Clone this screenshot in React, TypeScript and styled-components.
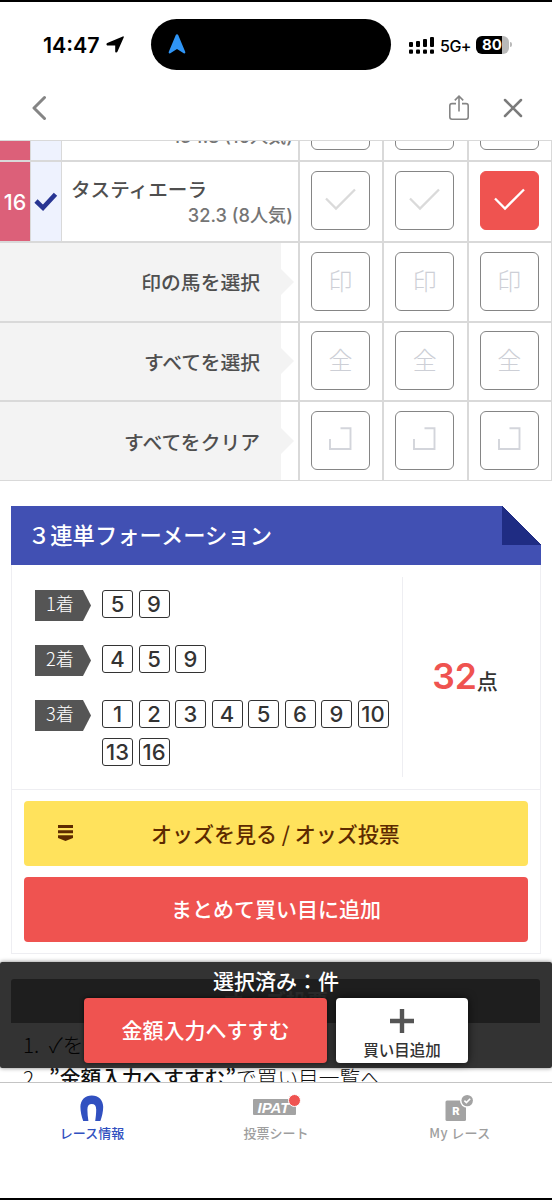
import React from "react";
import styled, { createGlobalStyle } from "styled-components";

const colors = {
  red: "#ef5350",
  indigo: "#4150b3",
  darkIndigo: "#1f2c83",
  line: "#d9d9d9",
  cardLine: "#eeeef2",
  text: "#4f4f4f",
  grey: "#9e9e9e",
};

const finishes = [
  { label: "1着", horses: [5, 9] },
  { label: "2着", horses: [4, 5, 9] },
  { label: "3着", horses: [1, 2, 3, 4, 5, 6, 9, 10, 13, 16] },
];

const bulkActions = [
  { label: "印の馬を選択", mark: "印" },
  { label: "すべてを選択", mark: "全" },
  { label: "すべてをクリア", mark: "" },
];

const columns = [0, 1, 2];

const CheckMark = ({ color }: { color: string }) => (
  <svg width="31" height="23" viewBox="0 0 31 23" fill="none">
    <path d="M1 10.5 11 20.5 30 1.5" stroke={color} strokeWidth="2.3" />
  </svg>
);

const StatusBar = () => (
  <Status>
    <Clock>
      14:47
      <svg width="18" height="17" viewBox="0 0 18 17">
        <path
          d="M16.8.4C17.6.1 18 .6 17.7 1.4L11.4 15.8C10.9 16.9 9.2 16.7 9.2 15.5V9.4H1.6C.4 9.4-.1 7.6 1.3 6.9Z"
          fill="#000"
        />
      </svg>
    </Clock>
    <Island>
      <svg width="18" height="20" viewBox="0 0 18 20">
        <path
          d="M7.8 1C8.2 0 9.8 0 10.2 1L17.2 17.8C17.7 19 16.7 19.8 15.7 19.2L9 15 2.3 19.2C1.3 19.8.3 19 .8 17.8Z"
          fill="#2f95f6"
        />
      </svg>
    </Island>
    <Signal>
      <svg width="26" height="18" viewBox="0 0 26 18">
        <rect x="0" y="6" width="4" height="5" rx="1" />
        <rect x="7" y="5" width="4" height="6" rx="1" />
        <rect x="14" y="3" width="4" height="8" rx="1" />
        <rect x="21" y="1" width="4" height="10" rx="1" />
        <rect x="0" y="13.5" width="4" height="4.2" rx="1" />
        <rect x="7" y="13.5" width="4" height="4.2" rx="1" />
        <rect x="14" y="13.5" width="4" height="4.2" rx="1" />
        <rect x="21" y="13.5" width="4" height="4.2" rx="1" />
      </svg>
      <Network>5G+</Network>
      <Battery>80</Battery>
      <BatteryTip />
    </Signal>
  </Status>
);

const NavBar = () => (
  <Nav>
    <svg width="15" height="26" viewBox="0 0 15 26" fill="none">
      <path
        d="M12.5 2.5 2 13 12.5 23.5"
        stroke="#858585"
        strokeWidth="3"
        strokeLinecap="round"
        strokeLinejoin="round"
      />
    </svg>
    <NavActions>
      <svg width="22" height="26" viewBox="0 0 22 26" fill="none">
        <path
          d="M8 8.6H4Q1.8 8.6 1.8 10.8V22Q1.8 24.2 4 24.2H18Q20.2 24.2 20.2 22V10.8Q20.2 8.6 18 8.6H14M11 16.5V1.5M6.8 5.4 11 1.2 15.2 5.4"
          stroke="#858585"
          strokeWidth="1.6"
        />
      </svg>
      <svg width="20" height="20" viewBox="0 0 20 20" fill="none">
        <path
          d="M2 2 18 18M18 2 2 18"
          stroke="#7b7b7b"
          strokeWidth="2.5"
          strokeLinecap="round"
        />
      </svg>
    </NavActions>
  </Nav>
);

const HorseTable = () => (
  <Table>
    <Row $height={21} $end>
      <HorseNumber />
      <MarkCell />
      <HorseCell>
        <Odds>134.8 (16人気)</Odds>
      </HorseCell>
      {columns.map((c) => (
        <CheckCell key={c}>
          <CheckBox />
        </CheckCell>
      ))}
    </Row>
    <Row $height={81}>
      <HorseNumber>16</HorseNumber>
      <MarkCell>
        <svg width="24" height="20" viewBox="0 0 24 20" fill="none">
          <path d="M2 9 9 15.8 21.5 2.2" stroke="#283593" strokeWidth="4.6" />
        </svg>
      </MarkCell>
      <HorseCell>
        <HorseName>タスティエーラ</HorseName>
        <Odds>32.3 (8人気)</Odds>
      </HorseCell>
      {columns.map((c) => (
        <CheckCell key={c}>
          <CheckBox $checked={c === 2}>
            <CheckMark color={c === 2 ? "#fff" : "#dadada"} />
          </CheckBox>
        </CheckCell>
      ))}
    </Row>
    {bulkActions.map((action, index) => (
      <Row key={action.label} $height={index === 2 ? 79 : 79.5}>
        <BulkCell>
          <BulkLabel>{action.label}</BulkLabel>
          <Arrow />
        </BulkCell>
        {columns.map((c) => (
          <CheckCell key={c}>
            <CheckBox>
              {action.mark || (
                <svg width="23" height="23" viewBox="0 0 23 23" fill="none">
                  <path
                    d="M11.5 1.2H21.5V22H1V12"
                    stroke="#d3d5db"
                    strokeWidth="1.9"
                  />
                </svg>
              )}
            </CheckBox>
          </CheckCell>
        ))}
      </Row>
    ))}
  </Table>
);

const FormationCard = () => (
  <Card>
    <CardTitle>３連単フォーメーション</CardTitle>
    <CardBody>
      <Summary>
        <Finishes>
          {finishes.map((finish) => (
            <Finish key={finish.label}>
              <FinishLabel>{finish.label}</FinishLabel>
              <Numbers>
                {finish.horses.map((n) => (
                  <NumberBox key={n}>{n}</NumberBox>
                ))}
              </Numbers>
            </Finish>
          ))}
        </Finishes>
        <Total>
          <TotalCount>32</TotalCount>点
        </Total>
      </Summary>
      <Buttons>
        <OddsButton>
          <svg width="15" height="16" viewBox="0 0 15 16" fill="#5d2a00">
            <path d="M0 0H15V3H0ZM0 5.2H15V8.2H0ZM0 10.2H15V13L7.5 16 0 13Z" />
          </svg>
          <span>オッズを見る / オッズ投票</span>
        </OddsButton>
        <AddAllButton>まとめて買い目に追加</AddAllButton>
      </Buttons>
    </CardBody>
  </Card>
);

const TabBar = () => (
  <Tabs>
    <Tab $active>
      <svg width="24" height="28" viewBox="0 0 24 28">
        <path
          d="M3.2 27C1.6 22.5.4 17.4.4 12.8.4 5.9 5.2 1.4 11.8 1.4S23.2 5.9 23.2 12.8C23.2 17.4 22 22.5 20.4 27H15.2C15.8 23 16.2 19 16.2 15.4 16.2 11.8 14.6 10 11.8 10S7.4 11.8 7.4 15.4C7.4 19 7.8 23 8.4 27Z"
          fill="#3150c0"
        />
      </svg>
      レース情報
    </Tab>
    <Tab>
      <IpatIcon>
        IPAT
        <Dot />
      </IpatIcon>
      投票シート
    </Tab>
    <Tab>
      <svg width="30" height="28" viewBox="0 0 30 28">
        <rect x="0.5" y="6.5" width="20.5" height="20.5" rx="1.5" fill="#a3a3a3" />
        <circle cx="22.2" cy="6.6" r="7.2" fill="#fff" />
        <circle cx="22.2" cy="6.6" r="5.7" fill="#a3a3a3" />
        <path
          d="m19.4 6.6 2 2 3.8-3.8"
          stroke="#fff"
          strokeWidth="1.6"
          fill="none"
        />
        <text
          x="10.8"
          y="21.2"
          fill="#fff"
          fontFamily="Inter, sans-serif"
          fontSize="11"
          fontWeight="800"
          textAnchor="middle"
        >
          R
        </text>
      </svg>
      <MyRace>My レース</MyRace>
    </Tab>
  </Tabs>
);

const App: React.FC = () => (
  <Screen lang="ja">
    <GlobalStyle />
    <StatusBar />
    <NavBar />
    <Content>
      <HorseTable />
      <FormationCard />
      <GuideTitle>オッズ投票</GuideTitle>
      <GuideList>
        <GuideItem>
          <span>1.</span>✓を選択
        </GuideItem>
        <GuideItem>
          <span>2.</span>
          <b>”金額入力へすすむ”</b>で買い目一覧へ
        </GuideItem>
      </GuideList>
      <BetBar>
        <BetCount>選択済み：件</BetCount>
        <BetActions>
          <ProceedButton>金額入力へすすむ</ProceedButton>
          <AddButton>
            <svg width="24" height="24" viewBox="0 0 24 24">
              <path d="M12 0V24M0 12H24" stroke="#555" strokeWidth="4.4" />
            </svg>
            買い目追加
          </AddButton>
        </BetActions>
      </BetBar>
    </Content>
    <TabBar />
  </Screen>
);

export default App;

const GlobalStyle = createGlobalStyle`
  * {
    box-sizing: border-box;
  }
  body {
    margin: 0;
    background: #fff;
    font-family: "Noto Sans CJK JP", sans-serif;
  }
  button {
    font-family: inherit;
    border: none;
    padding: 0;
  }
  svg {
    display: block;
    flex-shrink: 0;
  }
`;

const Screen = styled.div`
  width: 552px;
  height: 1200px;
  display: flex;
  flex-direction: column;
  overflow: hidden;
  border-top: 2px solid #000;
  border-bottom: 2px solid #000;
  color: ${colors.text};
`;

const Status = styled.div`
  height: 68px;
  flex-shrink: 0;
  display: flex;
  align-items: flex-start;
  padding: 17px 0 0 43px;
  font-family: Inter, sans-serif;
  color: #000;
`;

const Clock = styled.div`
  width: 108px;
  height: 51px;
  display: flex;
  align-items: center;
  gap: 6px;
  font-size: 21.4px;
  font-weight: 600;
`;

const Island = styled.div`
  width: 240px;
  height: 51px;
  border-radius: 26px;
  background: #000;
  padding: 15px 17px;
`;

const Signal = styled.div`
  height: 51px;
  display: flex;
  align-items: center;
  padding-left: 18px;
`;

const Network = styled.span`
  width: 35px;
  margin-left: 5px;
  padding-top: 2px;
  font-size: 16px;
  font-weight: 500;
  letter-spacing: -0.5px;
`;

const Battery = styled.div`
  width: 33px;
  height: 18px;
  margin-left: 1px;
  border-radius: 6px;
  background: linear-gradient(90deg, #000 26px, #b9b9b9 26px);
  color: #fff;
  font-size: 15px;
  font-weight: 700;
  line-height: 18px;
  padding-left: 6px;
`;

const BatteryTip = styled.div`
  width: 2px;
  height: 5px;
  margin-left: 1px;
  border-radius: 0 2px 2px 0;
  background: #b9b9b9;
`;

const Nav = styled.div`
  height: 70px;
  flex-shrink: 0;
  display: flex;
  align-items: flex-start;
  justify-content: space-between;
  padding: 25px 29px 0 32px;
`;

const NavActions = styled.div`
  display: flex;
  align-items: center;
  gap: 33px;
`;

const Content = styled.main`
  flex: 1;
  position: relative;
  overflow: hidden;
`;

const Table = styled.div`
  border-top: 1px solid ${colors.line};
`;

const Row = styled.div<{ $height: number; $end?: boolean }>`
  height: ${(props) => props.$height}px;
  display: flex;
  align-items: ${(props) => (props.$end ? "flex-end" : "stretch")};
  overflow: hidden;
  border-bottom: 2px solid ${colors.line};
  border-right: 1px solid ${colors.line};
  & > * {
    min-height: 100%;
  }
  &:last-child {
    border-bottom-width: 1px;
  }
`;

const HorseNumber = styled.div`
  width: 30px;
  display: flex;
  align-items: center;
  justify-content: center;
  background: #dc6079;
  color: #fff;
  font-family: Inter, sans-serif;
  font-size: 21.5px;
  font-weight: 500;
`;

const MarkCell = styled.div`
  width: 32px;
  border-left: 1px solid ${colors.line};
  border-right: 1px solid ${colors.line};
  background: #eef2fe;
  display: flex;
  align-items: center;
  justify-content: center;
`;

const HorseCell = styled.div`
  width: 236px;
  padding: 12px 5px 0 9px;
  ${Row}:first-child & {
    padding: 0 5px 13px 9px;
  }
`;

const HorseName = styled.div`
  font-size: 19.6px;
  font-weight: 500;
  line-height: 30px;
`;

const Odds = styled.div`
  text-align: right;
  font-family: Inter, "Noto Sans CJK JP", sans-serif;
  font-size: 18.2px;
  font-weight: 500;
  line-height: 22px;
  white-space: nowrap;
  color: #757575;
`;

const CheckCell = styled.div`
  flex: 1;
  border-left: 2px solid ${colors.line};
  display: flex;
  align-items: center;
  padding: 0 0 1.5px 11px;
  ${Row}:first-child & {
    padding-bottom: 10px;
  }
`;

const CheckBox = styled.div<{ $checked?: boolean }>`
  width: 59px;
  height: 59px;
  display: flex;
  align-items: center;
  justify-content: center;
  border: 1px solid ${(props) => (props.$checked ? colors.red : "#858585")};
  border-radius: 6px;
  background: ${(props) => (props.$checked ? colors.red : "#fff")};
  color: #cdcfd6;
  font-size: 24px;
  font-weight: 300;
  line-height: 54px;
  padding-bottom: 3px;
`;

const BulkCell = styled.div`
  width: 298px;
  display: flex;
  align-items: center;
`;

const BulkLabel = styled.div`
  width: 281px;
  height: 100%;
  display: flex;
  align-items: center;
  justify-content: flex-end;
  padding-right: 21px;
  background: #f3f3f3;
  font-size: 19.8px;
  font-weight: 500;
`;

const Arrow = styled.div`
  border: 13px solid transparent;
  border-left: 13px solid #f3f3f3;
  border-right: none;
`;

const Card = styled.section`
  width: 530px;
  margin: 25px 0 0 11px;
`;

const CardTitle = styled.div`
  height: 59px;
  padding-left: 17px;
  font-size: 22.3px;
  font-weight: 500;
  line-height: 57px;
  color: #fff;
  background: linear-gradient(
      to top right,
      ${colors.darkIndigo} 50%,
      #fff 50.5%
    )
    right top / 39px 39px no-repeat ${colors.indigo};
`;

const CardBody = styled.div`
  height: 389px;
  border: 1px solid ${colors.cardLine};
  border-top: none;
`;

const Summary = styled.div`
  height: 225px;
  padding: 12px 0;
  display: flex;
  border-bottom: 1px solid ${colors.cardLine};
`;

const Finishes = styled.div`
  width: 391px;
  padding: 13px 0 0 23px;
  border-right: 1px solid ${colors.cardLine};
  display: flex;
  flex-direction: column;
  gap: 24px;
`;

const Finish = styled.div`
  display: flex;
  align-items: flex-start;
  min-height: 31px;
`;

const FinishLabel = styled.div`
  width: 56px;
  height: 31px;
  flex-shrink: 0;
  padding-left: 11px;
  background: #555;
  clip-path: polygon(0 0, 48px 0, 100% 50%, 48px 100%, 0 100%);
  color: #fff;
  font-size: 18.2px;
  font-weight: 300;
  line-height: 27px;
`;

const Numbers = styled.div`
  width: 300px;
  margin-left: 11px;
  display: flex;
  flex-wrap: wrap;
  gap: 10px 5.5px;
`;

const NumberBox = styled.div`
  width: 31px;
  height: 28px;
  display: flex;
  align-items: center;
  justify-content: center;
  border: 1px solid #333;
  border-radius: 3px;
  color: #333;
  font-family: Inter, sans-serif;
  font-size: 22px;
  font-weight: 500;
  line-height: 26px;
`;

const Total = styled.div`
  flex: 1;
  display: flex;
  align-items: baseline;
  justify-content: center;
  padding: 78px 13px 0 0;
  color: #333;
  font-size: 21px;
  font-weight: 500;
`;

const TotalCount = styled.span`
  color: ${colors.red};
  font-family: Inter, sans-serif;
  font-size: 35.5px;
  font-weight: 600;
`;

const Buttons = styled.div`
  display: flex;
  flex-direction: column;
  gap: 11px;
  padding: 11px 12px;
`;

const BaseButton = styled.button`
  height: 65px;
  border-radius: 4px;
  background: ${colors.red};
  color: #fff;
  font-size: 21px;
  font-weight: 500;
  padding-bottom: 3px;
`;

const OddsButton = styled(BaseButton)`
  display: flex;
  align-items: center;
  padding: 0 0 1px 34px;
  background: #ffe25c;
  color: #5d2a00;
  span {
    margin-left: 78px;
    padding-bottom: 1px;
  }
`;

const AddAllButton = styled(BaseButton)``;

const GuideTitle = styled.div`
  width: 529px;
  height: 44px;
  margin: 25px 0 0 11px;
  border-radius: 3px 3px 0 0;
  background: #969696;
  color: #d0d0d0;
  text-align: center;
  font-size: 21px;
  font-weight: 700;
  line-height: 42px;
`;

const GuideList = styled.div`
  padding: 5px 0 0 23px;
  font-weight: 300;
  color: #111;
`;

const GuideItem = styled.div`
  font-size: 20.7px;
  line-height: 33px;
  white-space: nowrap;
  span {
    display: inline-block;
    width: 26px;
  }
  b {
    font-weight: 500;
  }
`;

const BetBar = styled.div`
  position: absolute;
  left: 0;
  right: 0;
  bottom: 14px;
  height: 106px;
  background: rgba(0, 0, 0, 0.8);
  box-shadow: 0 0 4px rgba(0, 0, 0, 0.5);
  border-radius: 2px;
  text-align: center;
  color: #fff;
`;

const BetCount = styled.div`
  height: 36px;
  font-size: 21px;
  font-weight: 500;
  line-height: 36px;
`;

const BetActions = styled.div`
  display: flex;
  justify-content: center;
  gap: 9px;
`;

const ProceedButton = styled(BaseButton)`
  width: 243px;
  box-shadow: 0 0 4px rgba(0, 0, 0, 0.7);
`;

const AddButton = styled(BaseButton)`
  width: 132px;
  display: flex;
  flex-direction: column;
  align-items: center;
  gap: 5px;
  padding-top: 11px;
  background: #fff;
  color: #333;
  font-size: 15.5px;
  line-height: 22px;
  box-shadow: 0 0 8px rgba(0, 0, 0, 0.7);
`;

const Tabs = styled.nav`
  height: 116px;
  flex-shrink: 0;
  display: flex;
  border-top: 1px solid #c4c4c4;
  background: #fff;
`;

const Tab = styled.div<{ $active?: boolean }>`
  flex: 1;
  display: flex;
  flex-direction: column;
  align-items: center;
  padding-top: 11px;
  font-size: 13px;
  font-weight: 500;
  line-height: 21px;
  color: ${(props) => (props.$active ? "#3150c0" : colors.grey)};
`;

const MyRace = styled.span`
  letter-spacing: 0.4px;
`;

const IpatIcon = styled.div`
  position: relative;
  width: 43px;
  height: 16px;
  margin: 5px 4px 7px 0;
  border-radius: 1px;
  background: #a3a3a3;
  color: #fff;
  font-family: "Liberation Sans", sans-serif;
  font-size: 15px;
  font-style: italic;
  font-weight: 700;
  line-height: 17px;
  padding-left: 5px;
`;

const Dot = styled.div`
  position: absolute;
  top: -5px;
  right: -5px;
  width: 13px;
  height: 13px;
  border: 1px solid #fff;
  border-radius: 50%;
  background: ${colors.red};
`;
